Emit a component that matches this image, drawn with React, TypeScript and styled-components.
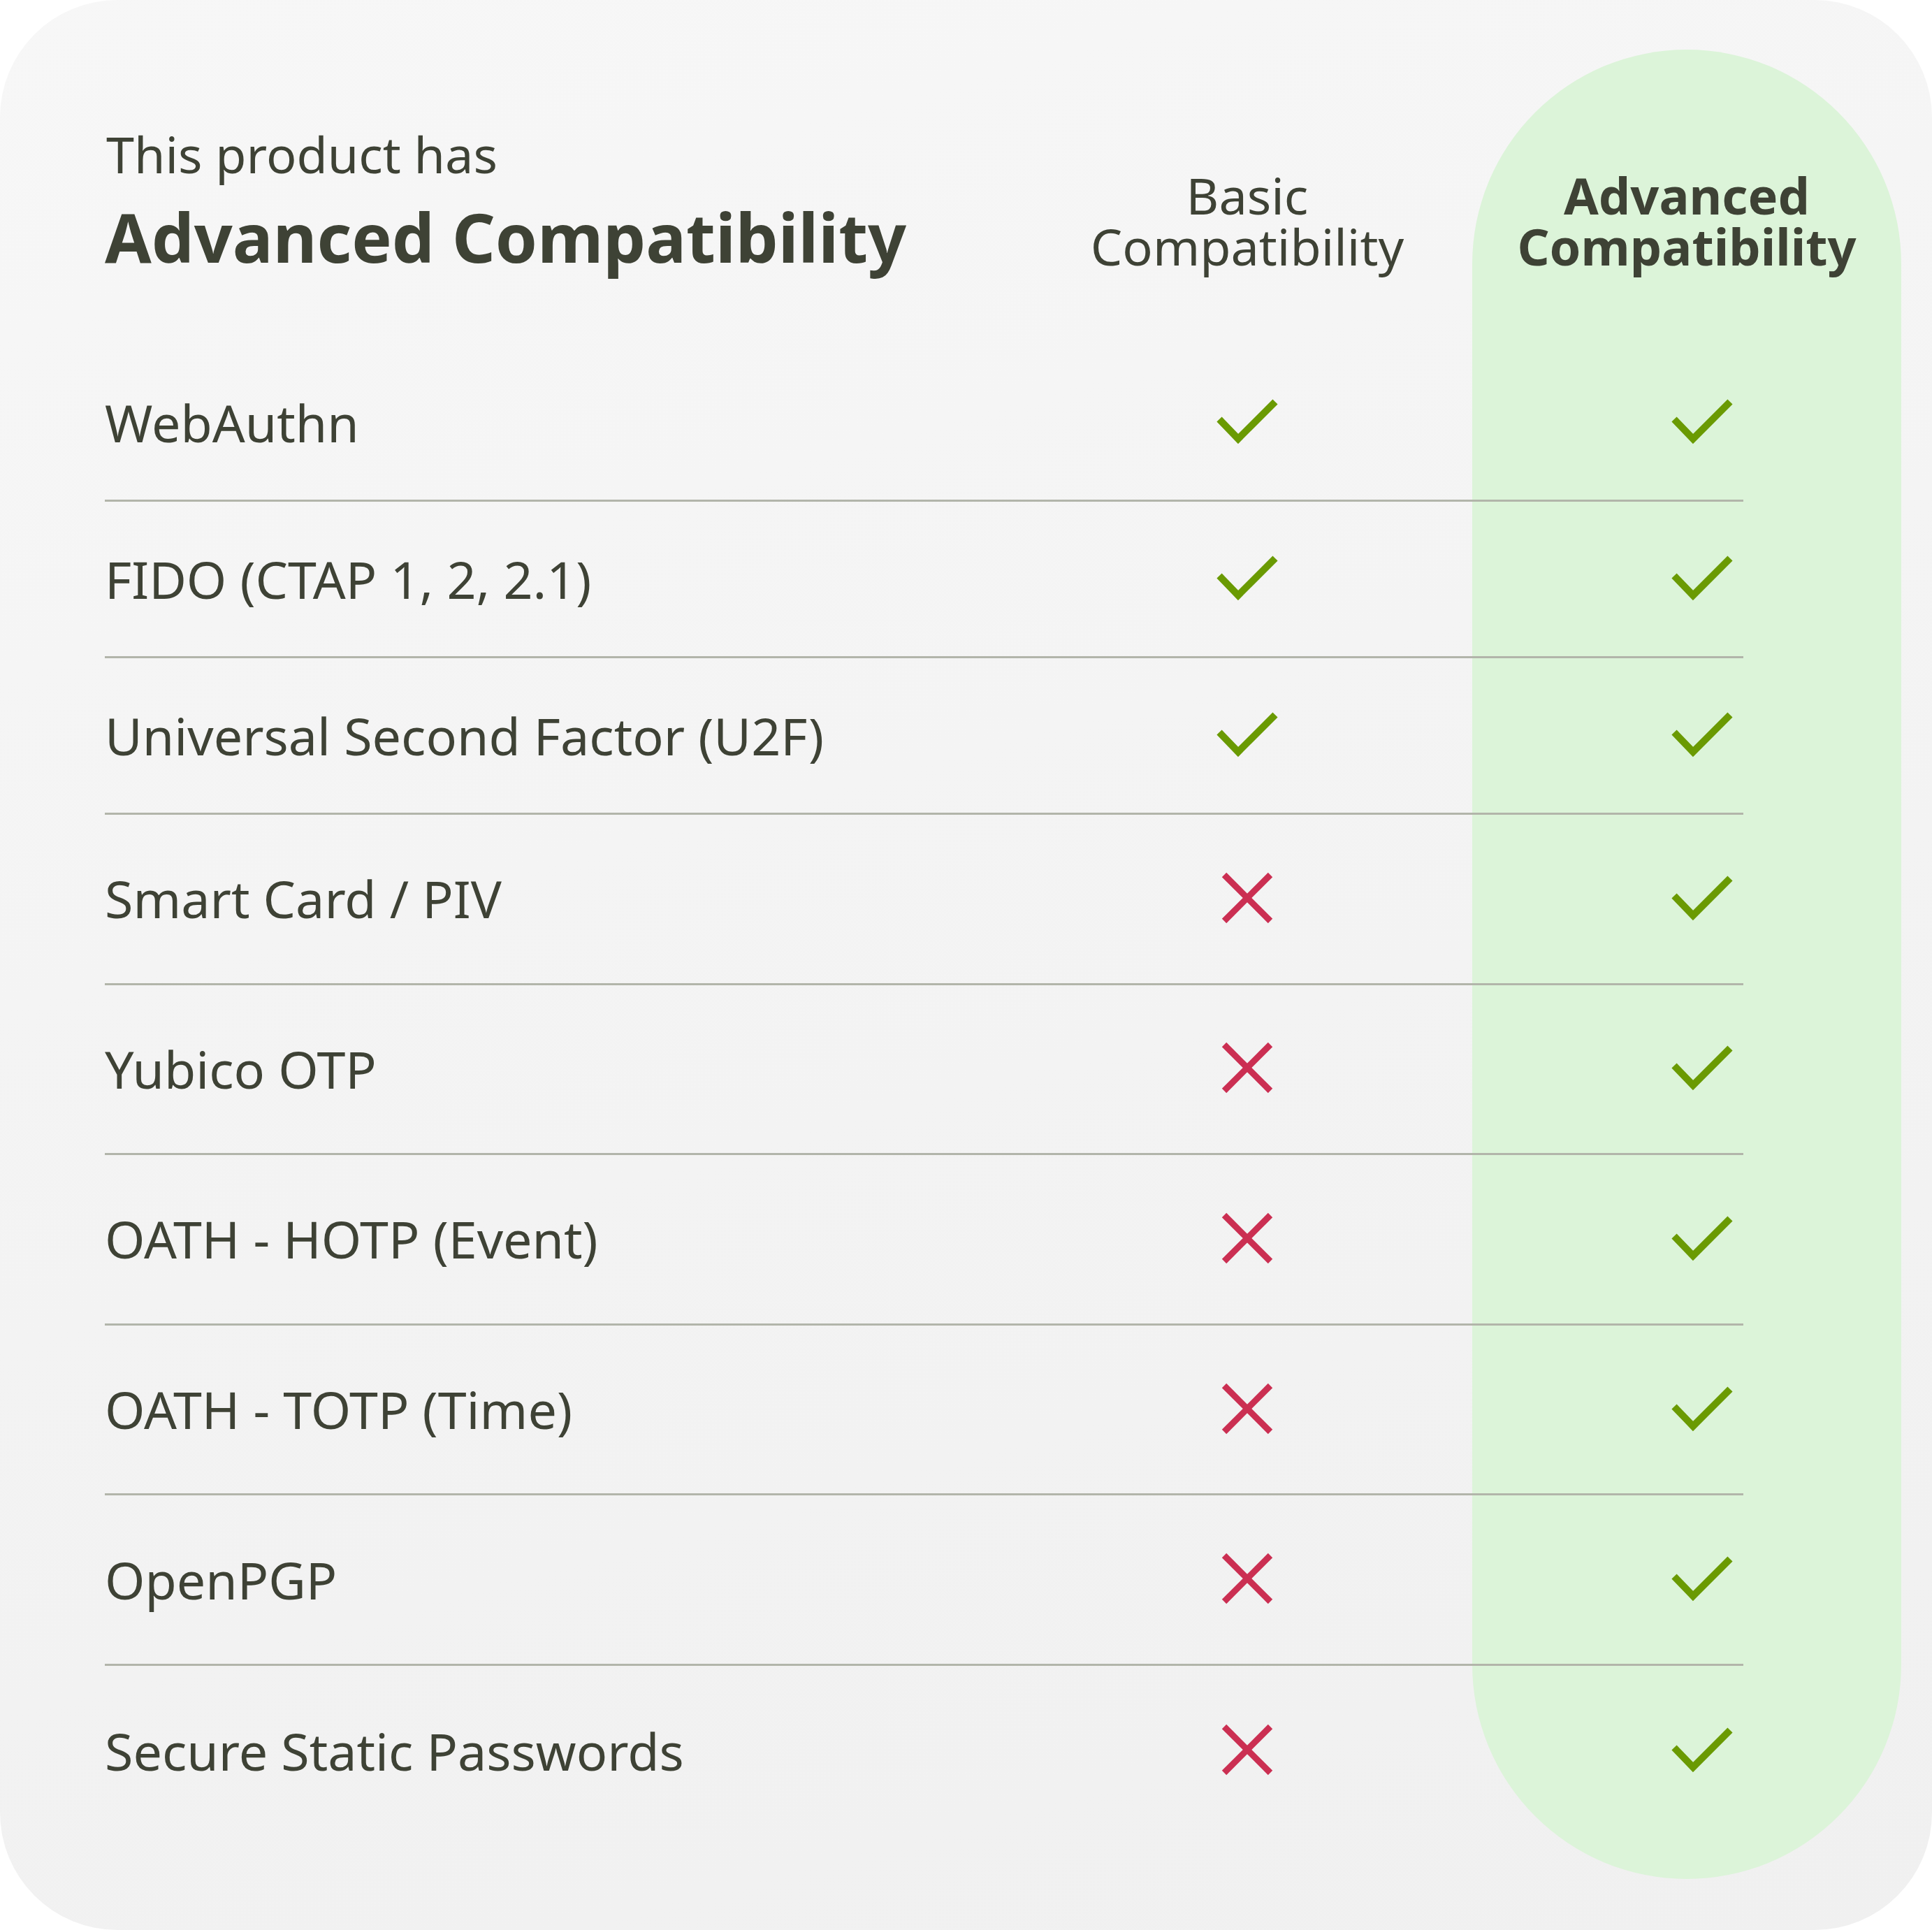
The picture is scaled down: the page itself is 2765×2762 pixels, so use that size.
import React from 'react';
import styled, { createGlobalStyle } from 'styled-components';

const GlobalStyle = createGlobalStyle`
  html, body {
    margin: 0;
    padding: 0;
    background: #ffffff;
  }
  * {
    box-sizing: border-box;
  }
`;

const TEXT = '#3e4235';
const FONT = `"Noto Sans", "Open Sans", sans-serif`;

type Support = 'yes' | 'no';

interface Feature {
  name: string;
  basic: Support;
  advanced: Support;
  tall?: boolean;
}

const features: Feature[] = [
  { name: 'WebAuthn', basic: 'yes', advanced: 'yes' },
  { name: 'FIDO (CTAP 1, 2, 2.1)', basic: 'yes', advanced: 'yes' },
  { name: 'Universal Second Factor (U2F)', basic: 'yes', advanced: 'yes' },
  { name: 'Smart Card / PIV', basic: 'no', advanced: 'yes', tall: true },
  { name: 'Yubico OTP', basic: 'no', advanced: 'yes', tall: true },
  { name: 'OATH - HOTP (Event)', basic: 'no', advanced: 'yes', tall: true },
  { name: 'OATH - TOTP (Time)', basic: 'no', advanced: 'yes', tall: true },
  { name: 'OpenPGP', basic: 'no', advanced: 'yes', tall: true },
  { name: 'Secure Static Passwords', basic: 'no', advanced: 'yes', tall: true },
];

const Card = styled.div`
  display: grid;
  width: 2765px;
  height: 2762px;
  border-radius: 168px;
  overflow: hidden;
  background: linear-gradient(165deg, #f7f7f7 0%, #f3f3f3 55%, #f0f0f0 100%);
  font-family: ${FONT};
  color: ${TEXT};

  & > * {
    grid-area: 1 / 1;
  }
`;

const HighlightLayer = styled.div`
  display: flex;
  justify-content: flex-end;
  padding: 71px 44px 73px 0;
`;

const Pill = styled.div`
  width: 614px;
  height: 100%;
  border-radius: 307px;
  background: #dcf4d9;
`;

const TableLayer = styled.div`
  display: flex;
  flex-direction: column;
  padding: 0 44px 0 150px;
`;

const Header = styled.div`
  display: grid;
  grid-template-columns: 1350px 570px 1fr 614px;
  align-items: start;
  height: 494px;
  padding-top: 177px;
`;

const TitleBlock = styled.div`
  display: flex;
  flex-direction: column;
`;

const Eyebrow = styled.div`
  font-size: 72px;
  line-height: 86px;
  font-weight: 400;
  margin-left: 2px;
`;

const Title = styled.h1`
  margin: 17px 0 0;
  font-size: 96.5px;
  line-height: 118px;
  font-weight: 700;
`;

const ColumnTitle = styled.div<{ $strong?: boolean }>`
  margin-top: 66px;
  text-align: center;
  font-size: 72px;
  line-height: 73px;
  font-weight: ${({ $strong }) => ($strong ? 700 : 400)};
`;

const Row = styled.div<{ $tall?: boolean; $last?: boolean }>`
  display: grid;
  grid-template-columns: 1350px 570px 1fr 118px;
  align-items: center;
  height: ${({ $tall }) => ($tall ? '243.6px' : '224px')};
  margin-right: 226px;
  border-bottom: ${({ $last }) => ($last ? 'none' : '3px solid #b2b5aa')};
`;

const Label = styled.div`
  font-size: 73.6px;
  line-height: 86px;
  font-weight: 400;
  white-space: nowrap;
`;

const IconCell = styled.div<{ $col: 2 | 4 }>`
  grid-column: ${({ $col }) => $col};
  display: flex;
  justify-content: center;
  align-items: center;
  padding-bottom: 3px;
`;

const CheckIcon = () => (
  <svg width="92" height="90" viewBox="0 0 92 90">
    <polyline
      points="6,42 33,70 86,17"
      fill="none"
      stroke="#6a9a02"
      strokeWidth={10}
      strokeLinecap="butt"
      strokeLinejoin="miter"
    />
  </svg>
);

const CrossIcon = () => (
  <svg width="82" height="82" viewBox="0 0 82 82">
    <g stroke="#cb2f52" strokeWidth={9} strokeLinecap="butt">
      <line x1="8" y1="8" x2="74" y2="74" />
      <line x1="74" y1="8" x2="8" y2="74" />
    </g>
  </svg>
);

const Mark = ({ value }: { value: Support }) =>
  value === 'yes' ? <CheckIcon /> : <CrossIcon />;

export default function App() {
  return (
    <>
      <GlobalStyle />
      <Card>
        <HighlightLayer>
          <Pill />
        </HighlightLayer>
        <TableLayer>
          <Header>
            <TitleBlock>
              <Eyebrow>This product has</Eyebrow>
              <Title>Advanced Compatibility</Title>
            </TitleBlock>
            <ColumnTitle>
              Basic
              <br />
              Compatibility
            </ColumnTitle>
            <div />
            <ColumnTitle $strong>
              Advanced
              <br />
              Compatibility
            </ColumnTitle>
          </Header>
          {features.map((f, i) => (
            <Row key={f.name} $tall={f.tall} $last={i === features.length - 1}>
              <Label>{f.name}</Label>
              <IconCell $col={2}>
                <Mark value={f.basic} />
              </IconCell>
              <IconCell $col={4}>
                <Mark value={f.advanced} />
              </IconCell>
            </Row>
          ))}
        </TableLayer>
      </Card>
    </>
  );
}
